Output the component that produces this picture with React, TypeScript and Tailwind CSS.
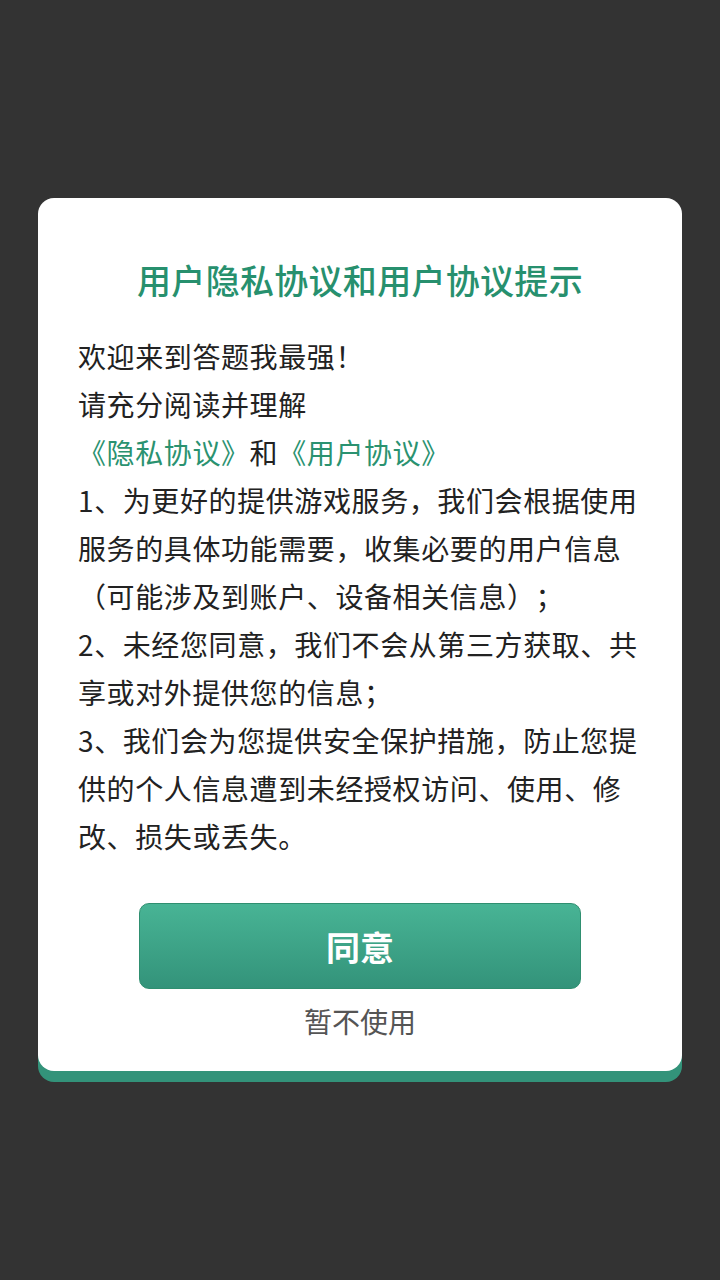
const FONT = { fontFamily: '"Noto Sans CJK SC", "Noto Sans", sans-serif' }

const CLAUSES = [
  '1、为更好的提供游戏服务，我们会根据使用服务的具体功能需要，收集必要的用户信息（可能涉及到账户、设备相关信息）；',
  '2、未经您同意，我们不会从第三方获取、共享或对外提供您的信息；',
  '3、我们会为您提供安全保护措施，防止您提供的个人信息遭到未经授权访问、使用、修改、损失或丢失。',
]

export default function App() {
  return (
    <div className="min-h-screen bg-[#333333] px-[38px] pt-[198px] [text-spacing-trim:space-all]" style={FONT}>
      <div className="bg-white rounded-[16px] shadow-[0_11px_0_#33937a] px-[40px] pt-[58px] pb-[30px]">
        <h1 className="text-center text-[34px] leading-[48px] font-medium tracking-[0.3px] text-[#27906e]">
          用户隐私协议和用户协议提示
        </h1>

        <div className="mt-[28px] text-[28px] leading-[48px] tracking-[0.6px] text-[#222222]">
          <p>欢迎来到答题我最强！</p>
          <p>请充分阅读并理解</p>
          <p>
            <span className="text-[#2a9270]">《隐私协议》</span>和<span className="text-[#2a9270]">《用户协议》</span>
          </p>
          {CLAUSES.map((c) => <p key={c}>{c}</p>)}
        </div>

        <div className="mt-[43px] flex flex-col items-center">
          <button className="w-[442px] h-[86px] rounded-[10px] border border-[#2f8f70] bg-gradient-to-b from-[#48b495] to-[#33937a] text-white text-[34px] font-bold">
            同意
          </button>
          <button className="mt-[12px] text-[28px] leading-[40px] text-[#555555]">暂不使用</button>
        </div>
      </div>
    </div>
  )
}
